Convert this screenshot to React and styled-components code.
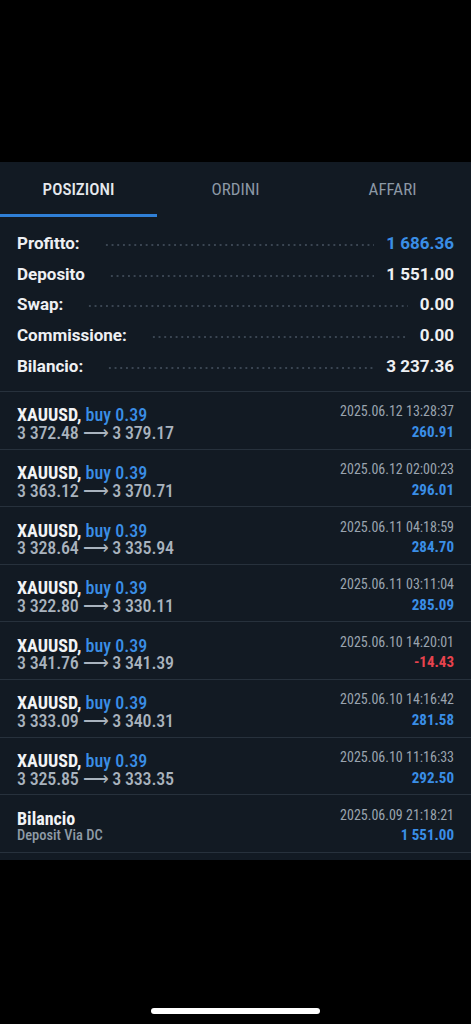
import React from "react";
import styled, { createGlobalStyle, css } from "styled-components";

const Global = createGlobalStyle`
  html, body { margin: 0; padding: 0; background: #000; }
  body { font-family: "Roboto", "Liberation Sans", sans-serif; -webkit-font-smoothing: antialiased; }
  * { box-sizing: border-box; }
`;

const cond = css`
  font-family: "Roboto Condensed", "Roboto", "Liberation Sans", sans-serif;
`;

const Screen = styled.div`
  width: 471px;
  height: 1024px;
  display: flex;
  flex-direction: column;
  background: #000;
`;

const TopArea = styled.div`
  height: 162px;
  flex: none;
`;

const Panel = styled.div`
  background: #121a23;
  padding-bottom: 7px;
  flex: none;
`;

const TabBar = styled.div`
  display: grid;
  grid-template-columns: repeat(3, 1fr);
  height: 55px;
`;

const Tab = styled.div`
  ${cond};
  display: flex;
  align-items: center;
  justify-content: center;
  padding-top: 2px;
  font-size: 17px;
  font-weight: ${(p) => (p.$active ? 500 : 400)};
  text-transform: uppercase;
  color: ${(p) => (p.$active ? "#e6e9ed" : "#8c98a5")};
  border-bottom: 3px solid ${(p) => (p.$active ? "#2f7fd6" : "transparent")};
`;

const Summary = styled.div`
  padding: 11px 17px 10px;
`;

const SumRow = styled.div`
  display: flex;
  align-items: center;
  height: 30.6px;
  font-size: 17px;
  font-weight: 700;
  color: #eef0f3;
`;

const SumLabel = styled.span`
  flex: none;
`;

const Leader = styled.span`
  flex: 1;
  align-self: center;
  height: 2px;
  margin: 4px 12px 0 24px;
  background-image: radial-gradient(circle, #3a4552 0.8px, transparent 1.1px);
  background-size: 5.7px 2px;
  background-repeat: repeat-x;
`;

const SumValue = styled.span`
  flex: none;
  color: ${(p) => (p.$blue ? "#3a8ee6" : "#eef0f3")};
`;

const List = styled.div`
  border-top: 1px solid #27313c;
`;

const Row = styled.div`
  display: flex;
  justify-content: space-between;
  padding: 14.5px 17px 7.1px;
  border-bottom: 1px solid #27313c;
`;

const LeftCol = styled.div`
  ${cond};
  display: flex;
  flex-direction: column;
  font-size: 18px;
  line-height: 17.5px;
`;

const Title = styled.div`
  white-space: nowrap;
`;

const Symbol = styled.span`
  font-weight: 700;
  color: #f1f3f5;
`;

const Side = styled.span`
  font-weight: 500;
  color: #3a8ee6;
`;

const Prices = styled.div`
  font-weight: 500;
  color: #a9b3be;
  letter-spacing: -0.2px;
  white-space: nowrap;
`;

const Comment = styled.div`
  color: #8f9aa6;
  font-size: 14.5px;
  font-weight: 500;
`;

const RightCol = styled.div`
  ${cond};
  display: flex;
  flex-direction: column;
  align-items: flex-end;
  line-height: 17.5px;
`;

const Time = styled.div`
  font-size: 14px;
  color: #9aa4af;
  margin-top: -3px;
  white-space: nowrap;
`;

const Profit = styled.div`
  font-size: 15px;
  font-weight: 700;
  margin-top: 3px;
  color: ${(p) => (p.$neg ? "#e8434e" : "#3a8ee6")};
`;

const Filler = styled.div`
  flex: 1;
`;

const HomeArea = styled.div`
  display: flex;
  justify-content: center;
  padding-bottom: 10px;
`;

const HomeIndicator = styled.div`
  width: 169px;
  height: 6px;
  border-radius: 3px;
  background: #fff;
`;

const summary = [
  { label: "Profitto:", value: "1 686.36", blue: true },
  { label: "Deposito", value: "1 551.00" },
  { label: "Swap:", value: "0.00" },
  { label: "Commissione:", value: "0.00" },
  { label: "Bilancio:", value: "3 237.36" },
];

const trades = [
  { open: "3 372.48", close: "3 379.17", time: "2025.06.12 13:28:37", profit: "260.91" },
  { open: "3 363.12", close: "3 370.71", time: "2025.06.12 02:00:23", profit: "296.01" },
  { open: "3 328.64", close: "3 335.94", time: "2025.06.11 04:18:59", profit: "284.70" },
  { open: "3 322.80", close: "3 330.11", time: "2025.06.11 03:11:04", profit: "285.09" },
  { open: "3 341.76", close: "3 341.39", time: "2025.06.10 14:20:01", profit: "-14.43", neg: true },
  { open: "3 333.09", close: "3 340.31", time: "2025.06.10 14:16:42", profit: "281.58" },
  { open: "3 325.85", close: "3 333.35", time: "2025.06.10 11:16:33", profit: "292.50" },
];

export default function App() {
  return (
    <>
      <Global />
      <Screen>
        <TopArea />
        <Panel>
          <TabBar>
            <Tab $active>Posizioni</Tab>
            <Tab>Ordini</Tab>
            <Tab>Affari</Tab>
          </TabBar>
          <Summary>
            {summary.map((s) => (
              <SumRow key={s.label}>
                <SumLabel>{s.label}</SumLabel>
                <Leader />
                <SumValue $blue={s.blue}>{s.value}</SumValue>
              </SumRow>
            ))}
          </Summary>
          <List>
            {trades.map((t) => (
              <Row key={t.time}>
                <LeftCol>
                  <Title>
                    <Symbol>XAUUSD,</Symbol> <Side>buy 0.39</Side>
                  </Title>
                  <Prices>
                    {t.open} ⟶ {t.close}
                  </Prices>
                </LeftCol>
                <RightCol>
                  <Time>{t.time}</Time>
                  <Profit $neg={t.neg}>{t.profit}</Profit>
                </RightCol>
              </Row>
            ))}
            <Row>
              <LeftCol>
                <Title>
                  <Symbol>Bilancio</Symbol>
                </Title>
                <Comment>Deposit Via DC</Comment>
              </LeftCol>
              <RightCol>
                <Time>2025.06.09 21:18:21</Time>
                <Profit>1 551.00</Profit>
              </RightCol>
            </Row>
          </List>
        </Panel>
        <Filler />
        <HomeArea>
          <HomeIndicator />
        </HomeArea>
      </Screen>
    </>
  );
}
